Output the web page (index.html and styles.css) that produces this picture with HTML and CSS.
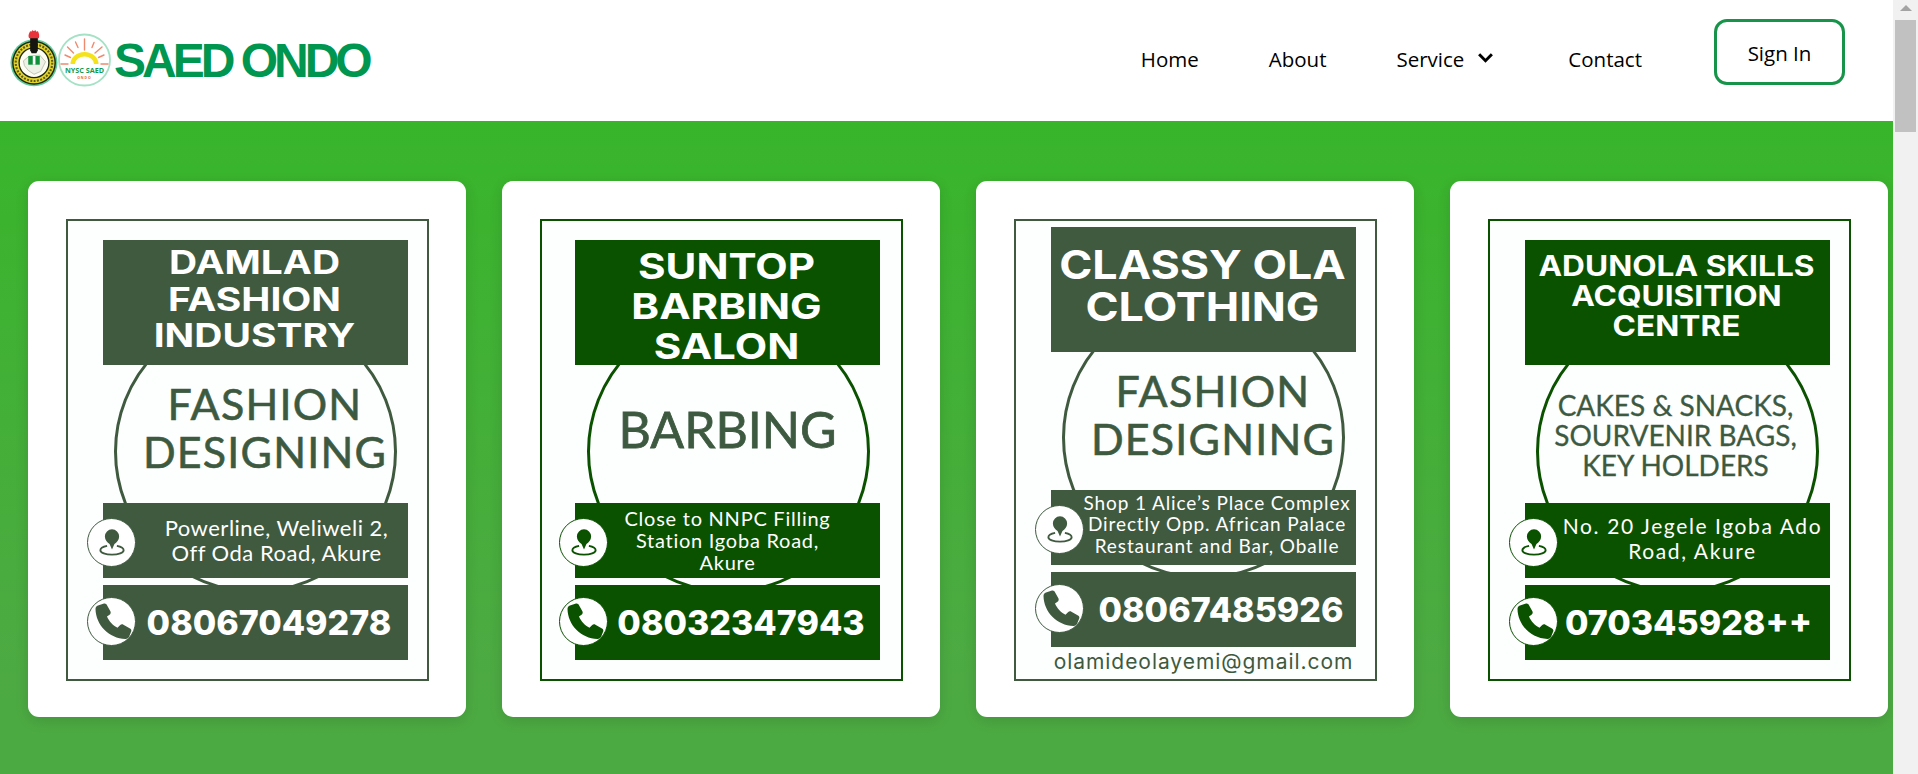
FILE: index.html
```html
<!DOCTYPE html>
<html lang="en">
<head>
<meta charset="utf-8">
<title>SAED Ondo</title>
<link rel="stylesheet" href="styles.css">
</head>
<body>
<svg class="sprite" aria-hidden="true">
  <symbol id="pin" viewBox="0 0 32 32">
    <path d="M16 2.5a7.6 7.6 0 0 0-7.6 7.6c0 3.8 2.7 6.3 5 8.1L16 24l2.6-5.800c2.300-1.800 5-4.300 5-8.100A7.600 7.600 0 0 0 16 2.500z" fill="currentColor"/>
    <path d="M10.800 20.200C6.500 21 3.600 22.600 3.600 24.800c0 2.700 5.500 4.700 12.400 4.700s12.400-2 12.400-4.700c0-2.200-2.900-3.800-7.200-4.600" fill="none" stroke="currentColor" stroke-width="2"/>
  </symbol>
  <symbol id="phone" viewBox="0 0 37 37">
    <path fill="currentColor" d="M3 2.500L9 .5C10.500.2 11.500 1 12 2.200L15.500 8.500C16 9.800 15.600 11 14.500 11.800L12 13.500C13.800 18 18 22.500 22.500 24.800L25 22.300C26 21.300 27.200 21.100 28.400 21.700L35 25.400C36.200 26.100 36.700 27.300 36.200 28.600L34.200 33.500C33.600 35 32.200 36 30.500 36C14 35.500.8 22 .5 6C.5 4.300 1.500 3 3 2.500Z"/>
  </symbol>
</svg>

<div class="window">
  <div class="page">
    <header class="topbar">
      <a class="brand" href="#">
        <svg class="emblem" viewBox="0 0 50 62" aria-hidden="true">
          <circle cx="25" cy="37" r="24.500" fill="#5fc79a"/>
          <circle cx="25" cy="37" r="22.800" fill="#1d2a12"/>
          <circle cx="25" cy="37" r="21.300" fill="#e3d32a"/>
          <circle cx="25" cy="37" r="19" fill="none" stroke="#5d5a18" stroke-width="2.200" stroke-dasharray="2 1.500"/>
          <circle cx="25" cy="37" r="15.500" fill="#fdfdf4" stroke="#1d2a12" stroke-width="1.400"/>
          <path d="M14 35l6-5 11-1 6 7-5 10-7 3-6-4-4-5z" fill="#eef1e6" stroke="#a9b09c" stroke-width=".7"/>
          <rect x="19" y="30" width="12" height="9" fill="#0e8f3a"/>
          <rect x="23.700" y="30" width="2.800" height="9" fill="#fff"/>
          <path d="M21 11h8v13l-1.500 3h-5L21 24z" fill="#15160f"/>
          <path d="M20 11.500c-1.500-3 0-5 1-7.500.8 1 1.500 1 2.200-1 .8 1.300 2 1.300 3.300 0 .6 1.800 1.500 2 2.500 1 1.200 2.500 2 5 1 7.500z" fill="#e8343a"/>
        </svg>
        <svg class="emblem-saed" viewBox="0 0 53 54" aria-hidden="true">
          <circle cx="26.500" cy="27" r="25.500" fill="#fff" stroke="#a5e2c5" stroke-width="1.800"/>
          <g stroke="#ef8a6f" stroke-width="1.400" stroke-linecap="round">
            <path d="M26.500 6v11M17.500 9l2.500 5.500M36 9.500l-2 5M9.500 14l6 6M44 14l-7 6M3 31h7M43 31h7M7 22l5.500 2.500M46 22l-5.500 2.500"/>
          </g>
          <path d="M12.500 31a14 12 0 0 1 28 0h-4.500a9.500 7.500 0 0 0-19 0z" fill="#f4e21c"/>
          <text class="saed-name" x="26.500" y="39.500" text-anchor="middle">NYSC SAED</text>
          <text class="saed-sub" x="26.500" y="45.500" text-anchor="middle">ONDO</text>
        </svg>
        <span class="brand-name">SAED ONDO</span>
      </a>
      <nav class="menu">
        <a class="menu-link" href="#">Home</a>
        <a class="menu-link" href="#">About</a>
        <a class="menu-link menu-link-drop" href="#">Service
          <svg class="chevron" viewBox="0 0 16 10" aria-hidden="true"><path d="M2 2l6 6 6-6" fill="none" stroke="currentColor" stroke-width="2.800"/></svg>
        </a>
        <a class="menu-link" href="#">Contact</a>
        <a class="signin" href="#">Sign In</a>
      </nav>
    </header>

    <main class="showcase">
      <article class="card">
        <div class="poster poster-slate">
          <span class="ring"></span>
          <h2 class="title title-damlad"><span class="title-text">DAMLAD<br>FASHION<br>INDUSTRY</span></h2>
          <p class="service service-fashion">FASHION<br>DESIGNING</p>
          <div class="band address address-damlad">
            <span class="badge badge-pin"><svg class="glyph-pin"><use href="#pin"/></svg></span>
            <p>Powerline, Weliweli 2,<br>Off Oda Road, Akure</p>
          </div>
          <div class="band contact">
            <span class="badge badge-phone"><svg class="glyph-phone"><use href="#phone"/></svg></span>
            <p class="number">08067049278</p>
          </div>
        </div>
      </article>

      <article class="card">
        <div class="poster poster-forest poster-nudged">
          <span class="ring"></span>
          <h2 class="title title-suntop"><span class="title-text">SUNTOP<br>BARBING<br>SALON</span></h2>
          <p class="service service-barbing">BARBING</p>
          <div class="band address address-suntop">
            <span class="badge badge-pin"><svg class="glyph-pin"><use href="#pin"/></svg></span>
            <p>Close to NNPC Filling<br>Station Igoba Road,<br>Akure</p>
          </div>
          <div class="band contact">
            <span class="badge badge-phone"><svg class="glyph-phone"><use href="#phone"/></svg></span>
            <p class="number">08032347943</p>
          </div>
        </div>
      </article>

      <article class="card">
        <div class="poster poster-slate poster-raised">
          <span class="ring"></span>
          <h2 class="title title-classy"><span class="title-text">CLASSY OLA<br>CLOTHING</span></h2>
          <p class="service service-fashion">FASHION<br>DESIGNING</p>
          <div class="band address address-classy">
            <span class="badge badge-pin"><svg class="glyph-pin"><use href="#pin"/></svg></span>
            <p>Shop 1 Alice’s Place Complex<br>Directly Opp. African Palace<br>Restaurant and Bar, Oballe</p>
          </div>
          <div class="band contact">
            <span class="badge badge-phone"><svg class="glyph-phone"><use href="#phone"/></svg></span>
            <p class="number number-classy">08067485926</p>
          </div>
          <p class="email">olamideolayemi@gmail.com</p>
        </div>
      </article>

      <article class="card">
        <div class="poster poster-forest">
          <span class="ring"></span>
          <h2 class="title title-adunola"><span class="title-text">ADUNOLA SKILLS<br>ACQUISITION<br>CENTRE</span></h2>
          <p class="service service-crafts">CAKES &amp; SNACKS,<br>SOURVENIR BAGS,<br>KEY HOLDERS</p>
          <div class="band address address-adunola">
            <span class="badge badge-pin"><svg class="glyph-pin"><use href="#pin"/></svg></span>
            <p>No. 20 Jegele Igoba Ado<br>Road, Akure</p>
          </div>
          <div class="band contact">
            <span class="badge badge-phone"><svg class="glyph-phone"><use href="#phone"/></svg></span>
            <p class="number number-short">070345928++</p>
          </div>
        </div>
      </article>
    </main>
  </div>

  <div class="scrollbar" aria-hidden="true">
    <span class="scroll-arrow"></span>
    <span class="scroll-thumb"></span>
  </div>
</div>
</body>
</html>
```

FILE: styles.css
```css
* { box-sizing: border-box; }

html, body {
  margin: 0;
  height: 100%;
  overflow: hidden;
}

body {
  font-family: "Open Sans", "Noto Sans", sans-serif;
  color: #000;
  background: #fff;
}

p, h2 { margin: 0; }
a { color: inherit; text-decoration: none; }

.sprite { width: 0; height: 0; position: absolute; }

.window {
  display: flex;
  height: 774px;
}

.page {
  flex: 1;
  min-width: 0;
  display: flex;
  flex-direction: column;
}

/* scrollbar */
.scrollbar {
  flex: 0 0 25px;
  background: #f1f1f1;
  display: flex;
  flex-direction: column;
  align-items: center;
  padding-top: 5px;
}
.scroll-arrow {
  width: 0;
  height: 0;
  border-left: 6px solid transparent;
  border-right: 6px solid transparent;
  border-bottom: 6px solid #a3a3a3;
}
.scroll-thumb {
  margin-top: 9px;
  width: 21px;
  height: 112px;
  background: #c1c1c1;
}

/* top bar */
.topbar {
  height: 121px;
  flex: none;
  background: #fff;
  display: flex;
  align-items: flex-start;
  justify-content: space-between;
  padding: 0 48px 0 10px;
}

.brand {
  display: flex;
  align-items: flex-start;
  padding-top: 26px;
}
.emblem { width: 48px; height: 62px; flex: none; }
.emblem-saed { width: 53px; height: 54px; margin-top: 7px; flex: none; }
.saed-name { font: 700 7.200px "Open Sans", sans-serif; fill: #0f9a54; }
.saed-sub { font: 700 3.400px "Open Sans", sans-serif; fill: #e2604f; letter-spacing: 1px; }

.brand-name {
  margin: 7px 0 0 3px;
  font: 700 48px/1.150 "Liberation Sans", sans-serif;
  letter-spacing: -4px;
  color: #00964f;
  white-space: nowrap;
}

.menu {
  display: flex;
  align-items: flex-start;
  font-size: 20.500px;
  font-weight: 500;
}
.menu-link {
  line-height: 26px;
  margin-top: 46px;
  margin-right: 70px;
  white-space: nowrap;
}
.menu-link-drop { display: flex; align-items: center; gap: 13px; margin-right: 74px; }
.chevron { width: 17px; height: 11px; margin-top: -3px; }

.signin {
  margin-top: 19px;
  margin-left: 2px;
  width: 131px;
  height: 66px;
  border: 3px solid #17944a;
  border-radius: 13px;
  display: flex;
  align-items: center;
  justify-content: center;
  padding-top: 1px;
}

/* card row */
.showcase {
  flex: 1;
  display: grid;
  grid-template-columns: repeat(4, 438px);
  gap: 36px;
  align-content: start;
  padding: 60px 5px 0 28px;
  background: linear-gradient(180deg, #38b52b 0%, #4daa43 85%, #4caa42 100%);
}

.card {
  height: 536px;
  background: #fff;
  border-radius: 11px;
  box-shadow: 0 4px 14px rgba(0, 0, 0, .12);
  padding: 38px 37px 0 38px;
}

/* poster */
.poster {
  position: relative;
  width: 363px;
  height: 462px;
  padding: 19px 19px 0 35px;
  border: 2px solid var(--ink);
  background: #fdfefe;
  display: flex;
  flex-direction: column;
  --ink: #3f5a3f;
}
.poster-slate { --ink: #3f5a3f; }
.poster-forest { --ink: #0b5200; }
.poster-raised { padding-top: 6px; }
.poster-nudged { padding-left: 33px; padding-right: 21px; }

.ring {
  position: absolute;
  left: 46px;
  top: 89px;
  width: 283px;
  height: 283px;
  border: 3px solid var(--ink);
  border-radius: 50%;
}
.poster-raised .ring { top: 75px; }
.poster-nudged .ring { left: 45px; }

.title {
  position: relative;
  height: 125px;
  flex: none;
  background: var(--ink);
  color: #fff;
  text-align: center;
  font-family: Inter, "Open Sans", sans-serif;
  font-weight: 700;
  white-space: nowrap;
}
.title-text { display: block; margin-left: -2px; }
.title-damlad { font-size: 33px; line-height: 36.600px; padding-top: 4px; }
.title-damlad .title-text { transform: scaleX(1.180); }
.title-suntop { font-size: 36px; line-height: 40px; padding-top: 6px; }
.title-suntop .title-text { transform: scaleX(1.170); }
.title-classy { font-size: 40px; line-height: 42px; padding-top: 17px; }
.title-classy .title-text { transform: scaleX(1.120); }
.title-adunola { font-size: 28px; line-height: 30px; padding-top: 11px; }
.title-adunola .title-text { transform: scaleX(1.130); }

.service {
  position: relative;
  flex: none;
  height: 137.500px;
  color: #3d5a40;
  font-family: Lato, "Open Sans", sans-serif;
  text-align: center;
  display: flex;
  align-items: center;
  justify-content: center;
  white-space: nowrap;
}
.service-fashion {
  font-size: 43px;
  line-height: 48px;
  letter-spacing: 1.200px;
  padding: 0 0 11px 19px;
  -webkit-text-stroke: .6px #3d5a40;
}
.service-barbing {
  font-size: 50px;
  line-height: 54px;
  padding-bottom: 10px;
  -webkit-text-stroke: .8px #3d5a40;
}
.service-crafts {
  font-size: 28px;
  line-height: 30px;
  padding: 2px 4px 0 0;
  -webkit-text-stroke: .3px #3d5a40;
}

.band {
  position: relative;
  flex: none;
  height: 75px;
  background: var(--ink);
  color: #fff;
  display: flex;
  align-items: center;
  justify-content: center;
}
.contact { margin-top: 7.500px; }

.address {
  font-family: Lato, "Open Sans", sans-serif;
  text-align: center;
  white-space: nowrap;
}
.address-damlad { font-size: 22px; line-height: 25px; letter-spacing: .5px; padding-left: 42px; }
.address-suntop { font-size: 20px; line-height: 22px; letter-spacing: .75px; }
.address-classy { font-size: 19px; line-height: 21.300px; letter-spacing: .9px; padding: 0 0 6px 27px; }
.address-adunola { font-size: 21px; line-height: 25px; letter-spacing: 1.600px; padding: 0 0 4px 30px; }

.number {
  font-family: Inter, "Open Sans", sans-serif;
  font-weight: 800;
  font-size: 34px;
  padding-left: 27px;
  white-space: nowrap;
}
.number-classy { padding-left: 35px; }
.number-short { padding-left: 22px; }

.badge {
  position: absolute;
  left: -16px;
  width: 49px;
  height: 49px;
  border-radius: 50%;
  background: #fff;
  border: 1.500px solid var(--ink);
  color: var(--ink);
  display: flex;
  align-items: center;
  justify-content: center;
}
.badge-pin { top: 15px; }
.badge-phone { top: 12px; border-width: 1px; }
.glyph-pin { width: 30px; height: 30px; }
.glyph-phone { width: 37px; height: 37px; margin-left: 3px; }

.email {
  margin-top: 2px;
  font-family: Inter, "Open Sans", sans-serif;
  font-size: 21px;
  line-height: 26px;
  letter-spacing: .95px;
  color: #3d5a40;
  text-align: center;
  white-space: nowrap;
}
```
